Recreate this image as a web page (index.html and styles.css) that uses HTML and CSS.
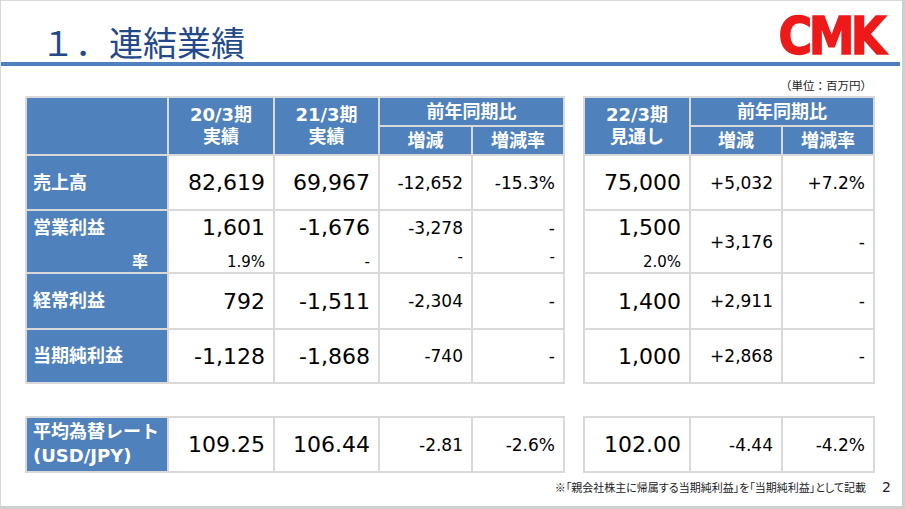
FILE: index.html
```html
<!DOCTYPE html>
<html lang="ja">
<head>
<meta charset="utf-8">
<title>連結業績</title>
<link rel="stylesheet" href="styles.css">
</head>
<body>
<div class="slide">
  <header class="hd">
    <h1 class="title">１．連結業績</h1>
    <div class="logo">CMK</div>
  </header>
  <div class="rule"></div>
  <div class="unit">（単位：百万円）</div>

  <div class="tables">
    <div class="grid gl">
      <div class="h r2"></div>
      <div class="h r2"><span>20/3期</span><span>実績</span></div>
      <div class="h r2"><span>21/3期</span><span>実績</span></div>
      <div class="h c2">前年同期比</div>
      <div class="h">増減</div>
      <div class="h">増減率</div>

      <div class="lab">売上高</div>
      <div class="c big">82,619</div>
      <div class="c big">69,967</div>
      <div class="c mid">-12,652</div>
      <div class="c mid">-15.3%</div>

      <div class="lab st-lab"><span class="la">営業利益</span><span class="lb">率</span></div>
      <div class="c st big"><span class="a">1,601</span><span class="b">1.9%</span></div>
      <div class="c st big"><span class="a">-1,676</span><span class="b">-</span></div>
      <div class="c st mid"><span class="a">-3,278</span><span class="b up">-</span></div>
      <div class="c st mid"><span class="a">-</span><span class="b up">-</span></div>

      <div class="lab">経常利益</div>
      <div class="c big">792</div>
      <div class="c big">-1,511</div>
      <div class="c mid">-2,304</div>
      <div class="c mid">-</div>

      <div class="lab">当期純利益</div>
      <div class="c big">-1,128</div>
      <div class="c big">-1,868</div>
      <div class="c mid">-740</div>
      <div class="c mid">-</div>
    </div>

    <div class="grid gr">
      <div class="h r2"><span>22/3期</span><span>見通し</span></div>
      <div class="h c2">前年同期比</div>
      <div class="h">増減</div>
      <div class="h">増減率</div>

      <div class="c big">75,000</div>
      <div class="c mid">+5,032</div>
      <div class="c mid">+7.2%</div>

      <div class="c st big"><span class="a">1,500</span><span class="b">2.0%</span></div>
      <div class="c mid">+3,176</div>
      <div class="c mid">-</div>

      <div class="c big">1,400</div>
      <div class="c mid">+2,911</div>
      <div class="c mid">-</div>

      <div class="c big">1,000</div>
      <div class="c mid">+2,868</div>
      <div class="c mid">-</div>
    </div>
  </div>

  <div class="tables fx">
    <div class="grid gl one">
      <div class="lab two">平均為替レート<br>(USD/JPY)</div>
      <div class="c big">109.25</div>
      <div class="c big">106.44</div>
      <div class="c mid">-2.81</div>
      <div class="c mid">-2.6%</div>
    </div>
    <div class="grid gr one">
      <div class="c big">102.00</div>
      <div class="c mid">-4.44</div>
      <div class="c mid">-4.2%</div>
    </div>
  </div>

  <footer class="ft">
    <span class="note">※「親会社株主に帰属する当期純利益」を「当期純利益」として記載</span>
    <span class="pg">2</span>
  </footer>
</div>
</body>
</html>
```

FILE: styles.css
```css
html, body {
  margin: 0;
  padding: 0;
  background: #cfcfcf;
}

.slide {
  width: 902px;
  height: 506px;
  box-sizing: border-box;
  border-top: 1px solid #d9d9d9;
  border-left: 1px solid #d9d9d9;
  background: #ffffff;
  font-family: "DejaVu Sans", "Noto Sans CJK JP", sans-serif;
  overflow: hidden;
}

.hd {
  height: 61px;
  display: flex;
  justify-content: space-between;
  align-items: flex-start;
  padding: 0 19px 0 40px;
}

.title {
  margin: 24px 0 0 0;
  font-family: "Noto Sans CJK JP", sans-serif;
  font-weight: 400;
  font-size: 34px;
  line-height: 34px;
  color: #24498a;
}

.logo {
  margin-top: 10px;
  font-family: "DejaVu Sans", sans-serif;
  font-weight: bold;
  font-size: 51px;
  line-height: 51px;
  color: #ee1a1a;
  letter-spacing: -4px;
  transform: scaleX(0.9);
  transform-origin: right center;
  -webkit-text-stroke: 1.5px #ee1a1a;
}

.rule {
  height: 4px;
  background: #4f81bd;
  margin-right: 2px;
}

.unit {
  margin-top: 12px;
  text-align: right;
  padding-right: 30px;
  font-family: "Noto Sans CJK JP", sans-serif;
  font-size: 11.5px;
  line-height: 14px;
  color: #222;
}

.tables {
  display: flex;
  gap: 18px;
  padding-left: 24px;
  margin-top: 4px;
}

.tables.fx {
  margin-top: 32px;
}

.grid {
  display: grid;
  gap: 2px;
  background: #d9d9d9;
  border: 2px solid #d9d9d9;
}

.gl {
  grid-template-columns: 140px 104px 103px 91px 90px;
  grid-template-rows: 27px 27px 53px 61px 54px 52px;
}

.gr {
  grid-template-columns: 104px 90px 90px;
  grid-template-rows: 27px 27px 53px 61px 54px 52px;
}

.grid.one {
  grid-template-rows: 53px;
}

.r2 { grid-row: span 2; }
.c2 { grid-column: span 2; }

.h {
  background: #4f81bd;
  color: #fff;
  font-weight: bold;
  font-size: 18px;
  line-height: 22px;
  display: flex;
  flex-direction: column;
  align-items: center;
  justify-content: center;
}

.lab {
  background: #4f81bd;
  color: #fff;
  font-weight: bold;
  font-size: 18px;
  line-height: 24px;
  padding-left: 6px;
  display: flex;
  align-items: center;
}

.lab.two {
  display: block;
  padding-top: 2px;
  box-sizing: border-box;
}

.st-lab {
  flex-direction: column;
  align-items: stretch;
  justify-content: space-between;
  padding-top: 4px;
  padding-bottom: 1px;
}

.st-lab .la {
  line-height: 26px;
}

.st-lab .lb {
  font-size: 16px;
  line-height: 18px;
  text-align: right;
  padding-right: 19px;
}

.c {
  background: #fff;
  color: #000;
  display: flex;
  align-items: center;
  justify-content: flex-end;
  padding-right: 8px;
}

.big { font-size: 22px; }
.mid { font-size: 17px; }

.c.st {
  flex-direction: column;
  align-items: flex-end;
  justify-content: space-between;
  padding-top: 4px;
  padding-bottom: 1px;
}

.st .a { line-height: 26px; }

.st .b {
  font-size: 15px;
  line-height: 18px;
}

.st .b.up {
  margin-bottom: 5px;
}

.ft {
  display: flex;
  justify-content: flex-end;
  align-items: center;
  gap: 16px;
  margin-top: 7px;
  padding-right: 11px;
  height: 14px;
}

.note {
  font-family: "Noto Sans CJK JP", sans-serif;
  font-size: 11px;
  line-height: 14px;
  color: #222;
  font-feature-settings: "palt";
}

.pg {
  font-size: 14px;
  line-height: 14px;
  color: #222;
}
```
